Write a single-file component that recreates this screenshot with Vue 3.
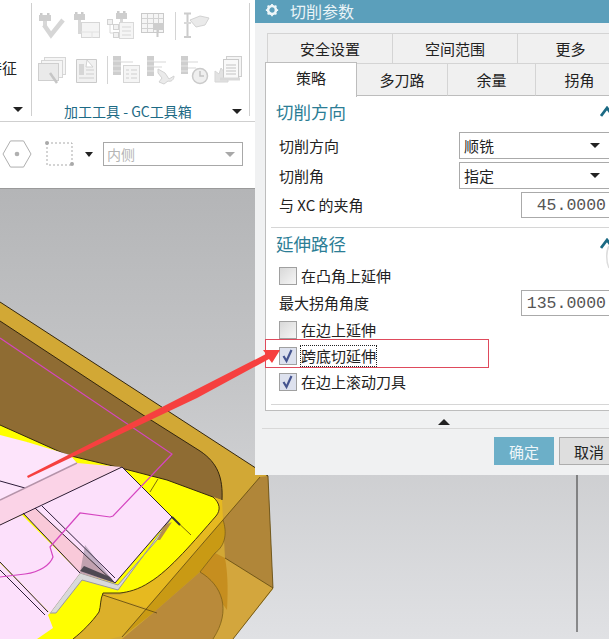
<script setup>
const rowOneTabs = ['安全设置', '空间范围', '更多']
const rowTwoTabs = ['策略', '多刀路', '余量', '拐角']
</script>

<template>
  <div class="page">
    <header class="ribbon">
      <div class="group group-side">
        <span class="side-label">特征</span>
        <i class="tri side-tri"></i>
      </div>
      <div class="group group-tools">
        <div class="tool-row">
          <svg class="ic" viewBox="0 0 30 30"><rect x="2" y="2" width="2.500" height="3" fill="#bdbdbd"/><rect x="9" y="2" width="2.500" height="3" fill="#bdbdbd"/><rect x="1" y="4" width="12" height="6" fill="#c2c2c2"/><rect x="5" y="10" width="4" height="5" fill="#cfcfcf"/><path d="M6 14l7 10L25 9" fill="none" stroke="#cdcdcd" stroke-width="4.500"/></svg>
          <svg class="ic" viewBox="0 0 30 30"><rect x="3" y="1" width="2.500" height="3" fill="#bdbdbd"/><rect x="9" y="1" width="2.500" height="3" fill="#bdbdbd"/><rect x="2" y="3" width="11" height="6" fill="#c2c2c2"/><rect x="6" y="9" width="3" height="14" fill="#cfcfcf"/><rect x="9.500" y="11.500" width="18" height="15" fill="#f2f2f2" stroke="#cdcdcd"/><path d="M9 21h18M20 21v6" stroke="#dcdcdc"/></svg>
          <svg class="ic" viewBox="0 0 30 30"><rect x="11" y="0" width="2.500" height="3" fill="#bdbdbd"/><rect x="17" y="0" width="2.500" height="3" fill="#bdbdbd"/><rect x="10" y="2" width="11" height="6" fill="#c2c2c2"/><rect x="14" y="8" width="3" height="6" fill="#cfcfcf"/><rect x="1.500" y="8.500" width="5" height="5" fill="#eee" stroke="#c8c8c8"/><rect x="7.500" y="13.500" width="5" height="5" fill="#eee" stroke="#c8c8c8"/><rect x="7.500" y="21.500" width="5" height="5" fill="#eee" stroke="#c8c8c8"/><path d="M4 14v8h4" fill="none" stroke="#d0d0d0"/><rect x="13.500" y="11.500" width="14" height="16" fill="#f3f3f3" stroke="#d0d0d0"/><path d="M16 16h9M16 20h9M16 24h9" stroke="#cdcdcd"/></svg>
          <svg class="ic" viewBox="0 0 30 30"><rect x="1.500" y="2.500" width="22" height="19" fill="#f3f3f3" stroke="#bdbdbd"/><path d="M2 7.500h21M2 12.500h21M2 17.500h21M7.500 3v18M13.500 3v18M18.500 3v18" stroke="#c8c8c8"/><rect x="13" y="12" width="11" height="7" fill="#c2c2c2"/><path d="M17.500 19v7" stroke="#bdbdbd" stroke-width="2"/></svg>
          <i class="vline vline-one"></i>
          <svg class="ic" viewBox="0 0 30 30"><path d="M5.500 2v24M2 2.500h7M2 26h7" stroke="#c0c0c0" stroke-width="2" fill="none"/><rect x="2" y="11" width="7" height="2" fill="#cfcfcf"/><path d="M8 9l10-4 9 2-4 7-9 2z" fill="#e6e6e6" stroke="#c8c8c8"/></svg>
        </div>
        <div class="tool-row tool-row-two">
          <svg class="ic" viewBox="0 0 30 30"><rect x="7.500" y="2.500" width="21" height="17" fill="#f3f3f3" stroke="#cdcdcd"/><rect x="4.500" y="5.500" width="21" height="17" fill="#f3f3f3" stroke="#cdcdcd"/><rect x="1.500" y="8.500" width="20" height="17" fill="#e6e6e6" stroke="#c4c4c4"/><path d="M13 18l7 10" stroke="#b8b8b8" stroke-width="2.500"/></svg>
          <svg class="ic" viewBox="0 0 30 30"><path d="M5.500 4.500H25.500V27.500H5.500Z" fill="#eee" stroke="#bdbdbd"/><path d="M16 5l6 7h-7z" fill="#fff" stroke="#c8c8c8"/><rect x="8" y="9" width="5" height="11" fill="#cdcdcd"/><path d="M15 15h8M15 19h8M8 23h15" stroke="#c4c4c4"/></svg>
          <i class="vline vline-two"></i>
          <svg class="ic" viewBox="0 0 30 30"><rect x="1" y="1" width="8" height="19" fill="#c2c2c2"/><path d="M1 6h8M1 11h8M1 16h8" stroke="#e2e2e2"/><path d="M9 7h12" stroke="#cfcfcf"/><rect x="11.500" y="10.500" width="16" height="17" fill="#f3f3f3" stroke="#cdcdcd"/><path d="M14 15h3M19 15h6M14 19h3M19 19h6M14 23h3M19 23h6" stroke="#c4c4c4"/></svg>
          <svg class="ic" viewBox="0 0 30 30"><rect x="1" y="1" width="7" height="20" fill="#c2c2c2"/><path d="M1 6h7M1 11h7M1 16h7" stroke="#e2e2e2"/><path d="M8 7h12M8 12h8" stroke="#cfcfcf"/><path d="M12 14l7 4 4 6 5-3c0 4-3 6-6 5l-4 3-5-2 3-4-4-5z" fill="#e6e6e6" stroke="#c8c8c8"/></svg>
          <svg class="ic" viewBox="0 0 30 30"><rect x="1" y="1" width="7" height="18" fill="#c2c2c2"/><path d="M1 6h7M1 11h7M1 16h7" stroke="#e2e2e2"/><path d="M8 7h10M8 13h8" stroke="#cfcfcf"/><circle cx="20" cy="21" r="7.500" fill="#ececec" stroke="#bdbdbd" stroke-width="1.500"/><path d="M20 16v5h4" fill="none" stroke="#b5b5b5" stroke-width="1.500"/></svg>
          <svg class="ic" viewBox="0 0 30 30"><path d="M1 27V16l4 3 2-6 3 4 4-4v14z" fill="#dcdcdc" stroke="#cdcdcd"/><rect x="12.500" y="1.500" width="15" height="20" fill="#f2f2f2" stroke="#c4c4c4"/><rect x="9.500" y="4.500" width="15" height="20" fill="#f8f8f8" stroke="#bdbdbd"/><path d="M12 10h10M12 13h10M12 16h10M12 19h10" stroke="#b5b5b5"/><path d="M6 24h20" stroke="#d0d0d0" stroke-width="3"/></svg>
        </div>
        <div class="group-foot">
          <span class="group-name">加工工具 - GC工具箱</span>
          <i class="tri"></i>
        </div>
      </div>
    </header>
    <section class="options">
      <svg class="hex" viewBox="0 0 32 30"><path d="M1 15L9 1h14l8 14-8 14H9z" fill="#fff" stroke="#a8a8a8"/><circle cx="16" cy="15" r="2.500" fill="#b0b0b0"/></svg>
      <svg class="sel" viewBox="0 0 30 26"><rect x="2" y="2" width="25" height="22" fill="none" stroke="#a9a9a9" stroke-dasharray="2 2"/><circle cx="2" cy="2" r="2" fill="#a9a9a9"/><circle cx="27" cy="23" r="2" fill="#a9a9a9"/></svg>
      <i class="tri opt-tri"></i>
      <div class="combo"><span>内侧</span><i class="tri grey-tri"></i></div>
    </section>
    <main class="canvas">
      <svg class="model" viewBox="0 189 609 450" preserveAspectRatio="none">
        <path d="M577 475V632" stroke="#333" stroke-width="1"/>
        <path d="M0 302L268 476L273 589L233 639H0Z" fill="#d2a835"/>
        <path d="M260 477L268 476L273 588L225 558L223 520Z" fill="#b08639"/>
        <path d="M225 558L273 588L233 639H213Z" fill="#d3a63d"/>
        <path d="M0 321L143 415L200 451C218 463 223 478 222 500L213 497L167 480L117 467L67 455L0 425Z" fill="#8f6c33"/>
        <path d="M0 425L67 455L117 467L167 480L213 497C220 503 221 510 216 516C195 540 170 570 150 582C138 590 128 592 120 593H103C100 600 101 606 99 612C92 622 82 632 73 639H0Z" fill="#ffff00"/>
        <path d="M216 516C221 510 220 503 213 497L222 500L223 520L200 547L147 608L103 595H120C128 592 138 590 150 582C170 570 195 540 216 516Z" fill="#e6b920"/>
        <path d="M103 595L147 608L122 636L110 639H73C82 632 92 622 99 612C101 606 100 600 103 595Z" fill="#dcb02a"/>
        <path d="M223 520C227 532 226 545 215 553L200 572L153 613L122 637L147 608L200 547Z" fill="#c99a14"/>
        <path d="M215 553L225 558C228 575 228 590 227 610L200 572Z" fill="#c68e1f"/>
        <path d="M200 572C222 585 232 610 213 639H122L153 613Z" fill="#b98a3a"/>
        <path d="M0 302L268 476M0 321L143 415L200 451C218 463 223 478 222 500M213 497L167 480L117 467L67 455L0 425" fill="none" stroke="#33260d" stroke-width="1"/>
        <path d="M213 497C220 503 221 510 216 516C195 540 170 570 150 582C138 590 128 592 120 593H103C100 600 101 606 99 612C92 622 82 632 73 639" fill="none" stroke="#4a3a0a" stroke-width="1"/>
        <path d="M260 477L122 637M225 558L273 588L233 639M268 476L273 588M172 517L191 535M103 595L157 613M27 442L25 450M158 479L150 492" fill="none" stroke="#5d4610" stroke-width=".8"/>
        <path d="M223 520C227 532 226 545 215 553L200 572C222 585 232 610 213 639" fill="none" stroke="#7d5f16" stroke-width=".8"/>
        <path d="M172 517L157 540L118 585L80 573L50 613L56 613L82 580L118 590Z" fill="#d9d9d9" stroke="#9a969e" stroke-width="1"/>
        <path d="M157 540L165 525L172 522L160 540Z" fill="#b58f4b"/>
        <path d="M172 517L180 525" stroke="#333" stroke-width="2"/>
        <path d="M0 435L27 442L70 455L77 463L0 500Z" fill="#fde4fb"/>
        <path d="M122 467L172 517L115 583L35 508Z" fill="#fce0fb"/>
        <path d="M23 513L35 508L115 583L80 573Z" fill="#f9c9d9"/>
        <path d="M0 525L22 515L80 573L50 613L0 562Z" fill="#fce0fb"/>
        <path d="M0 563L50 613L48 615L53 628L37 639H0Z" fill="#fce0fb"/>
        <path d="M0 500L77 463L122 467L0 525Z" fill="#fbd3e7"/>
        <path d="M0 525L122 467L172 517L115 583M35 508L115 583M42 506L115 578M23 513L80 573M0 562L48 612M0 570L45 615M0 481L25 488" fill="none" stroke="#2c1c38" stroke-width="1"/>
        <path d="M0 500L77 463" stroke="#b493aa" stroke-width="1.500"/>
        <path d="M85 545L115 583L80 573Z" fill="#5a5560" opacity=".35"/>
        <path d="M80 571L115 583L110 577L84 566Z" fill="#4e4852"/>
        <path d="M0 338L172 454L113 516L110 517L80 513L50 547L53 557C50 565 40 572 25 574L0 577" fill="none" stroke="#d545c0" stroke-width="1.200"/>
      </svg>
    </main>

    <aside class="dialog">
      <div class="title">
        <svg class="gear" viewBox="0 0 16 16"><circle cx="8" cy="8" r="4.500" fill="none" stroke="#eef6f9" stroke-width="3"/><path d="M8 1v2M8 13v2M1 8h2M13 8h2M3 3l1.500 1.500M11.500 11.500L13 13M13 3l-1.500 1.500M4.500 11.500L3 13" stroke="#eef6f9" stroke-width="2"/></svg>
        <span>切削参数</span>
      </div>
      <div class="tabs tabs-one">
        <span v-for="t in rowOneTabs" :key="t" class="tab">{{ t }}</span>
      </div>
      <div class="tabs tabs-two">
        <span v-for="(t, i) in rowTwoTabs" :key="t" class="tab" :class="{ active: i === 0 }">{{ t }}</span>
      </div>
      <div class="panel">
        <div class="section section-a">
          <div class="sec-head">
            <span>切削方向</span>
            <svg class="chev" viewBox="0 0 14 11"><path d="M1 10L7 2l6 8" fill="none" stroke="#1c6a84" stroke-width="2.800"/></svg>
          </div>
          <div class="row row-sel"><span>切削方向</span><div class="select"><span>顺铣</span><i class="tri"></i></div></div>
          <div class="row row-sel gap"><span>切削角</span><div class="select"><span>指定</span><i class="tri"></i></div></div>
          <div class="row row-in wide"><span>与 XC 的夹角</span><div class="input">45.0000</div></div>
        </div>
        <div class="section section-b">
          <div class="sec-head">
            <span>延伸路径</span>
            <svg class="chev" viewBox="0 0 14 11"><path d="M1 10L7 2l6 8" fill="none" stroke="#1c6a84" stroke-width="2.800"/></svg>
          </div>
          <label class="row check"><i class="box"></i><span>在凸角上延伸</span></label>
          <div class="row row-in tight"><span>最大拐角角度</span><div class="input">135.0000</div></div>
          <label class="row check tight"><i class="box"></i><span>在边上延伸</span></label>
          <label class="row check"><i class="box on"><svg viewBox="0 0 16 16"><path d="M3.500 8l3 5 5-11" fill="none" stroke="#45548f" stroke-width="2.200"/></svg></i><span class="focus">跨底切延伸</span></label>
          <label class="row check"><i class="box on"><svg viewBox="0 0 16 16"><path d="M3.500 8l3 5 5-11" fill="none" stroke="#45548f" stroke-width="2.200"/></svg></i><span>在边上滚动刀具</span></label>
        </div>
      </div>
      <div class="expand"><i class="up"></i></div>
      <div class="footer">
        <button class="btn primary">确定</button>
        <button class="btn">取消</button>
      </div>
    </aside>

    <svg class="annot" viewBox="0 0 609 639">
      <rect x="265.500" y="339.500" width="223" height="28" fill="none" stroke="#df4a5c"/>
      <path d="M609 246C606 251 606 262 609 268" fill="none" stroke="#dcdcdc" stroke-width="1.500"/>
      <path d="M27 476L266 354L263 350L280 350L272 363L269 359L197 398L28 478Z" fill="#f6403f"/>
    </svg>
  </div>
</template>

<style scoped>
.page {
  position: relative;
  width: 609px;
  height: 639px;
  overflow: hidden;
  display: flex;
  flex-direction: column;
  background: #fff;
  font-family: "Noto Sans CJK SC", "Liberation Sans", sans-serif;
  color: #222;
}
.ribbon {
  height: 121px;
  flex: none;
  display: flex;
  border-bottom: 1px solid #cfcfcf;
  box-sizing: content-box;
}
.group { position: relative; height: 113px; margin-top: 3px; box-sizing: border-box; }
.group-side { width: 32px; border-right: 1px solid #cfcfcf; }
.side-label {
  position: absolute;
  left: -13px;
  top: 55px;
  font-size: 15px;
  line-height: 20px;
  white-space: nowrap;
}
.tri {
  display: block;
  width: 0;
  height: 0;
  flex: none;
  border-left: 5px solid transparent;
  border-right: 5px solid transparent;
  border-top: 5px solid #222;
}
.side-tri { position: absolute; left: 13px; top: 104px; }
.group-tools {
  width: 218px;
  border-right: 1px solid #cfcfcf;
  padding: 8px 0 0 6px;
  display: flex;
  flex-direction: column;
}
.tool-row { display: flex; align-items: center; gap: 4px; height: 30px; }
.tool-row-two { margin-top: 14px; margin-left: -1px; }
.group-foot {
  position: absolute;
  left: 32px;
  right: 7px;
  top: 97px;
  display: flex;
  align-items: center;
  justify-content: space-between;
  height: 22px;
}
.group-name { font-size: 14px; line-height: 22px; color: #1d6a85; white-space: nowrap; }
.ic { width: 30px; height: 30px; display: block; flex: none; opacity: .8; }
.vline { display: block; width: 1px; background: #d4d4d4; flex: none; }
.vline-one { height: 28px; margin: 0 2px 0 1px; }
.vline-two { height: 28px; margin-left: 2px; }

.options {
  height: 67px;
  flex: none;
  display: flex;
  align-items: center;
  padding-left: 2px;
  box-sizing: border-box;
  border-bottom: 1px solid #9a9a9a;
  padding-bottom: 2px;
}
.hex { width: 30px; height: 28px; flex: none; }
.sel { width: 30px; height: 26px; margin-left: 13px; flex: none; }
.opt-tri { margin-left: 10px; border-left-width: 4px; border-right-width: 4px; }
.combo {
  margin-left: 10px;
  width: 140px;
  height: 24px;
  box-sizing: border-box;
  border: 1px solid #a8a8a8;
  display: flex;
  align-items: center;
  justify-content: space-between;
  padding: 0 7px 0 3px;
  color: #b5b5b5;
  font-size: 14px;
}
.grey-tri { border-top-color: #a8a8a8; }

.canvas {
  flex: 1;
  background: linear-gradient(#b4b5b7, #c3c4c6 40%, #e0e1e4);
}
.model { display: block; width: 609px; height: 450px; }

.dialog {
  position: absolute;
  left: 255px;
  top: 0;
  width: 354px;
  height: 475px;
  background: #f0f1f2;
  display: flex;
  flex-direction: column;
}
.title {
  height: 23px;
  flex: none;
  box-sizing: border-box;
  background: #5b9fbb;
  display: flex;
  align-items: center;
  padding: 0 0 1px 10px;
  gap: 11px;
  color: #eaf4f7;
  font-size: 16px;
  line-height: 22px;
}
.gear { width: 14px; height: 14px; flex: none; margin-top: -2px; }
.tabs { display: flex; flex: none; font-size: 15px; }
.tab {
  box-sizing: border-box;
  flex: none;
  display: flex;
  align-items: center;
  justify-content: center;
  border: 1px solid #d4d4d4;
  border-left-width: 0;
  background: #f0f0f0;
}
.tabs-one { margin: 10px 0 0 12px; height: 30px; }
.tabs-one .tab { border-bottom: 0; padding-bottom: 1px; }
.tabs-one .tab:nth-child(1) { width: 126px; border-left-width: 1px; }
.tabs-one .tab:nth-child(2) { width: 125px; }
.tabs-one .tab:nth-child(3) { width: 92px; padding-left: 14px; }
.tabs-two { margin-left: 10px; height: 33px; width: 344px; }
.tabs-two .tab { border-bottom: 1px solid #bdbdbd; }
.tabs-two .tab:nth-child(1) { width: 92px; }
.tabs-two .tab:nth-child(2) { width: 91px; }
.tabs-two .tab:nth-child(3) { width: 88px; }
.tabs-two .tab:nth-child(4) { width: 88px; }
.tabs-two .active {
  background: #fff;
  border: 1px solid #bdbdbd;
  border-bottom: 0;
  height: 35px;
  margin-top: -1px;
  padding-bottom: 6px;
  position: relative;
  z-index: 1;
}
.panel {
  width: 350px;
  margin-left: 10px;
  height: 315px;
  flex: none;
  box-sizing: border-box;
  background: #fff;
  border: 1px solid #bdbdbd;
  border-top: 0;
  padding: 0 0 0 5px;
}
.section { border-bottom: 1px solid #d6d6d6; }
.section-a { height: 131px; }
.section-b { height: 176px; }
.sec-head {
  height: 34px;
  box-sizing: border-box;
  display: flex;
  align-items: center;
  justify-content: space-between;
  padding: 0 0 3px 5px;
  color: #2b7d95;
  font-size: 17.500px;
}
.chev { width: 14px; height: 11px; flex: none; }
.row {
  display: flex;
  align-items: center;
  justify-content: space-between;
  padding-left: 8px;
  font-size: 15px;
  height: 26px;
  line-height: 20px;
}
.row-sel { height: 27px; margin-top: 2px; }
.row-sel.gap { margin-top: 3px; }
.row-in { margin-top: 2px; }
.row-in.wide { margin-top: 3px; }
.row-in.tight { margin-top: 1px; }
.tight { margin-top: 1px; }
.select {
  width: 155px;
  height: 27px;
  box-sizing: border-box;
  border: 1px solid #aaa;
  display: flex;
  align-items: center;
  justify-content: space-between;
  padding: 0 13px 0 4px;
}
.input {
  width: 93px;
  height: 26px;
  box-sizing: border-box;
  border: 1px solid #aaa;
  text-align: right;
  padding-right: 7px;
  font-family: "Liberation Mono", monospace;
  font-size: 16.500px;
  line-height: 25px;
  color: #555;
}
.check { justify-content: flex-start; gap: 4px; }
.section-b .sec-head { margin-bottom: 1px; }
.box {
  width: 18px;
  height: 18px;
  box-sizing: border-box;
  border: 1px solid #a0a0a0;
  background: linear-gradient(135deg, #d8d8d8, #f6f6f6);
  display: block;
  flex: none;
}
.box.on { background: #dde1ee; }
.box svg { display: block; width: 16px; height: 16px; }
.focus { outline: 1px dotted #222; line-height: 20px; }
.expand {
  height: 17px;
  flex: none;
  display: flex;
  align-items: center;
  justify-content: center;
  padding-left: 24px;
}
.up {
  display: block;
  width: 0;
  height: 0;
  border-left: 6px solid transparent;
  border-right: 6px solid transparent;
  border-bottom: 6px solid #222;
  margin-top: 5px;
}
.footer {
  margin-left: 7px;
  border-top: 1px solid #d8d8d8;
  padding: 8px 0 10px 232px;
  display: flex;
  gap: 5px;
  flex: none;
  box-sizing: border-box;
}
.btn {
  width: 60px;
  height: 28px;
  flex: none;
  box-sizing: border-box;
  padding: 0;
  border: 1px solid #adadad;
  background: #dedede;
  color: #222;
  font-family: inherit;
  font-size: 15px;
}
.primary { border: 0; background: #6cafc8; color: #eef6f9; }
.annot {
  position: absolute;
  left: 0;
  top: 0;
  width: 609px;
  height: 639px;
  pointer-events: none;
}
</style>
